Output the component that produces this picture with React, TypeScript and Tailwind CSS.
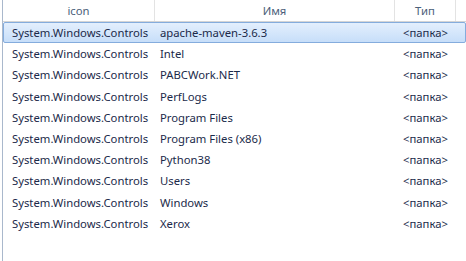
const rows = [
  'apache-maven-3.6.3',
  'Intel',
  'PABCWork.NET',
  'PerfLogs',
  'Program Files',
  'Program Files (x86)',
  'Python38',
  'Users',
  'Windows',
  'Xerox',
];

function App() {
  return (
    <div
      className="w-[466px] h-[261px] bg-white overflow-hidden text-[11.3px]"
      style={{ fontFamily: '"Noto Sans", "DejaVu Sans", sans-serif' }}
    >
      <div className="ml-[2px] h-full border-l border-[#a9b8cc] flex flex-col">
        {/* Header */}
        <div className="flex h-[22px] border-b border-[#d5d5d5] text-[#4c607a] leading-[21px] shrink-0">
          <div className="w-[152px] text-center border-r border-[#e3e3e3]">icon</div>
          <div className="w-[240px] text-center border-r border-[#e3e3e3]">Имя</div>
          <div className="w-[61px] text-center border-r border-[#e3e3e3]">Тип</div>
          <div className="flex-1" />
        </div>

        {/* Rows */}
        <div className="flex flex-col text-[#1b2a4a]">
          {rows.map((name, i) => (
            <div
              key={name}
              className={`flex h-[21.2px] items-center leading-[19px] border rounded-[2px] ${
                i === 0
                  ? 'border-[#84acdd] bg-gradient-to-b from-[#e3effd] to-[#c7def9]'
                  : 'border-transparent'
              }`}
            >
              <div className="w-[152px] pl-[8px] whitespace-nowrap">System.Windows.Controls</div>
              <div className="w-[240px] pl-[4px] whitespace-nowrap">{name}</div>
              <div className="w-[61px] pl-[7px] whitespace-nowrap">&lt;папка&gt;</div>
            </div>
          ))}
        </div>
      </div>
    </div>
  );
}

export default App;
